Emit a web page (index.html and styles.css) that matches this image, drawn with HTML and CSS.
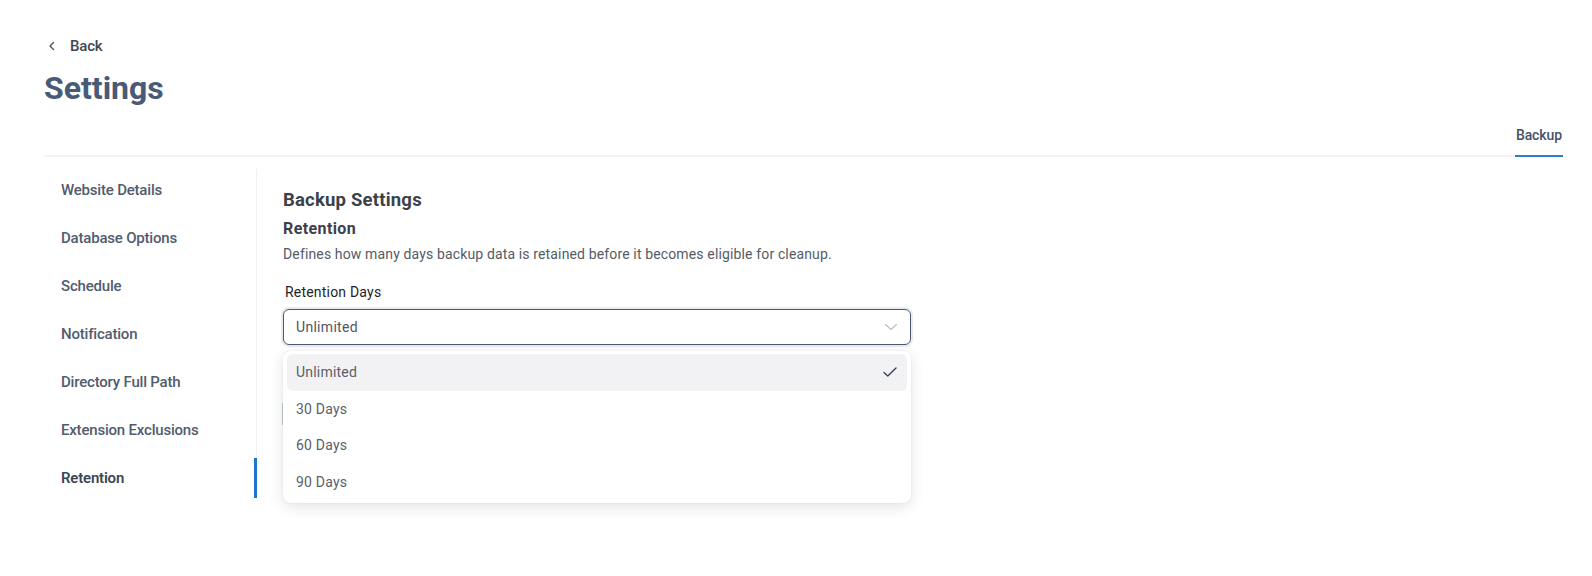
FILE: index.html
```html
<!DOCTYPE html>
<html>
<head>
<meta charset="utf-8">
<link rel="stylesheet" href="styles.css">
</head>
<body>
<div class="page">
  <a class="back" href="#">
    <svg class="back-icon" width="10" height="10" viewBox="0 0 10 10"><path d="M6.5 1.5 L3 5 L6.5 8.5" fill="none" stroke="#4a5568" stroke-width="1.4" stroke-linecap="round" stroke-linejoin="round"/></svg>
    <span>Back</span>
  </a>
  <h1 class="title">Settings</h1>
  <div class="tabs">
    <div class="tab active">Backup</div>
  </div>
  <div class="main">
    <nav class="sidebar">
      <div class="nav-item">Website Details</div>
      <div class="nav-item">Database Options</div>
      <div class="nav-item">Schedule</div>
      <div class="nav-item">Notification</div>
      <div class="nav-item">Directory Full Path</div>
      <div class="nav-item">Extension Exclusions</div>
      <div class="nav-item active">Retention</div>
    </nav>
    <section class="content">
      <h2 class="section-title">Backup Settings</h2>
      <h3 class="sub-title">Retention</h3>
      <p class="desc">Defines how many days backup data is retained before it becomes eligible for cleanup.</p>
      <label class="label">Retention Days</label>
      <div class="select-wrap">
        <div class="select">
          <span>Unlimited</span>
          <svg class="chev" width="14" height="8" viewBox="0 0 14 8"><path d="M1.5 1.5 L7 6.5 L12.5 1.5" fill="none" stroke="#b8bcc4" stroke-width="1.1" stroke-linecap="round" stroke-linejoin="round"/></svg>
        </div>
        <div class="under"></div>
        <div class="menu">
          <div class="option selected"><span>Unlimited</span>
            <svg width="16" height="12" viewBox="0 0 16 12"><path d="M2 6.5 L5.8 10 L14 2" fill="none" stroke="#3d4a5c" stroke-width="1.5" stroke-linecap="round" stroke-linejoin="round"/></svg>
          </div>
          <div class="option">30 Days</div>
          <div class="option">60 Days</div>
          <div class="option">90 Days</div>
        </div>
      </div>
    </section>
  </div>
</div>
</body>
</html>
```
FILE: styles.css
```css
* { box-sizing: border-box; }
html {
  height: 576px;
  overflow: hidden;
}
body {
  margin: 0;
  height: 576px;
  overflow: hidden;
  background: #fff;
  font-family: Roboto, "Liberation Sans", sans-serif;
  color: #4a5568;
}
.page {
  padding: 36px 29px 0 44px;
}
.back {
  display: flex;
  align-items: center;
  gap: 13px;
  margin-left: 3px;
  text-decoration: none;
  color: #3f4652;
  font-size: 15px;
  font-weight: 500;
  height: 20px;
  letter-spacing: -0.2px;
}
.title {
  margin: 12px 0 0;
  font-size: 32px;
  line-height: 40px;
  font-weight: 700;
  color: #485a76;
  letter-spacing: 0;
}
.tabs {
  display: flex;
  justify-content: flex-end;
  margin-top: 16px;
  border-bottom: 2px solid #f3f3f3;
}
.tab {
  font-size: 14px;
  font-weight: 500;
  color: #465068;
  padding: 0 1px 10px;
  line-height: 20px;
  margin-top: 1px;
  margin-bottom: -2px;
  letter-spacing: -0.1px;
}
.tab.active {
  border-bottom: 2px solid #2b7cd3;
}
.main {
  display: flex;
  margin-top: 12px;
}
.sidebar {
  width: 213px;
  border-right: 1px solid #eef0f2;
  display: flex;
  flex-direction: column;
  gap: 8px;
  padding-top: 1px;
  padding-bottom: 1px;
}
.nav-item {
  height: 40px;
  display: flex;
  align-items: center;
  padding-left: 17px;
  font-size: 15px;
  font-weight: 500;
  color: #515c6d;
  letter-spacing: -0.2px;
  margin-right: -1px;
}
.nav-item.active {
  color: #3d4654;
  font-weight: 600;
  border-right: 3px solid #1f74d0;
}
.content {
  padding-left: 26px;
  padding-top: 19px;
}
.section-title {
  margin: 0;
  font-size: 18.5px;
  line-height: 24px;
  font-weight: 700;
  color: #3c4149;
  letter-spacing: 0.2px;
}
.sub-title {
  margin: 6px 0 0;
  font-size: 16px;
  line-height: 22px;
  font-weight: 700;
  color: #3c4149;
  letter-spacing: 0.4px;
}
.desc {
  margin: 4px 0 0;
  font-size: 14px;
  line-height: 20px;
  color: #555b64;
  letter-spacing: 0.14px;
}
.label {
  display: block;
  margin: 18px 0 0 2px;
  font-size: 14px;
  line-height: 20px;
  color: #1f2328;
  letter-spacing: 0.2px;
}
.select-wrap {
  position: relative;
  width: 628px;
  margin-top: 7px;
}
.select {
  height: 36px;
  border: 1px solid #4b5870;
  border-radius: 6px;
  box-shadow: 0 0 0 2px #e9ebef;
  display: flex;
  align-items: center;
  justify-content: space-between;
  padding: 0 12px 0 12px;
  font-size: 14px;
  color: #50565f;
  letter-spacing: 0.3px;
}
.under {
  margin-top: 58px;
  width: 2px;
  height: 22px;
  border-left: 1px solid #c6cad1;
  margin-left: -1px;
}
.menu {
  position: absolute;
  top: 42px;
  left: 0;
  width: 628px;
  background: #fff;
  border-radius: 8px;
  box-shadow: 0 4px 14px rgba(20, 30, 50, 0.12), 0 0 2px rgba(20, 30, 50, 0.08);
  padding: 3px 4px;
}
.option {
  height: 36.5px;
  display: flex;
  align-items: center;
  justify-content: space-between;
  padding: 0 9px 0 9px;
  font-size: 14px;
  color: #5a6069;
  border-radius: 6px;
  letter-spacing: 0.2px;
}
.option.selected {
  background: #f2f2f4;
}
```
